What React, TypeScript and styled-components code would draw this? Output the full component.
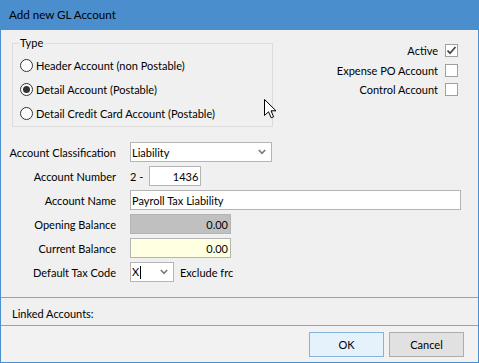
import React from "react";
import styled, { createGlobalStyle } from "styled-components";

const GlobalStyle = createGlobalStyle`
  html, body { margin: 0; padding: 0; background: #ffffff; }
  body {
    font-family: Lato, "Noto Sans", "DejaVu Sans", sans-serif;
    font-size: 11px;
    color: #000000;
  }
  * { box-sizing: border-box; }
`;

const Window = styled.div`
  position: relative;
  width: 479px;
  height: 363px;
  background: #4b8ece;
  padding: 0 1px 1px 1px;
  display: flex;
  flex-direction: column;
  overflow: hidden;
`;

const TitleBar = styled.div`
  height: 30px;
  flex: none;
  display: flex;
  align-items: center;
  padding-left: 8px;
  padding-bottom: 1px;
  font-size: 11.6px;
  color: #000000;
`;

const Client = styled.div`
  flex: 1;
  background: #f0f0f0;
  display: flex;
  flex-direction: column;
`;

const TopSection = styled.div`
  display: flex;
  padding: 5px 20px 0 11px;
`;

const GroupBox = styled.fieldset`
  width: 261px;
  height: 92px;
  margin: 0;
  padding: 2px 6px 0 6px;
  border: 1px solid #dcdcdc;
  display: flex;
  flex-direction: column;
`;

const Legend = styled.legend`
  padding: 0 1px;
  line-height: 16px;
`;

const RadioRow = styled.label`
  height: 24px;
  display: flex;
  align-items: center;
  gap: 3px;
  padding-left: 1px;
`;

const RadioCircle = styled.span<{ $checked?: boolean }>`
  width: 13px;
  height: 13px;
  border-radius: 50%;
  border: 1px solid #333333;
  background: #ffffff;
  display: flex;
  align-items: center;
  justify-content: center;
  flex: none;
  &::after {
    content: "";
    width: 7px;
    height: 7px;
    border-radius: 50%;
    background: ${(p) => (p.$checked ? "#333333" : "transparent")};
  }
`;

const CheckColumn = styled.div`
  flex: 1;
  display: flex;
  flex-direction: column;
  align-items: flex-end;
  padding-top: 6px;
`;

const CheckRow = styled.label`
  height: 19.5px;
  display: flex;
  align-items: center;
  gap: 7px;
`;

const CheckBox = styled.span`
  width: 13px;
  height: 13px;
  border: 1px solid #a0a0a0;
  background: #ffffff;
  display: flex;
  align-items: center;
  justify-content: center;
  flex: none;
`;

const FormGrid = styled.div`
  display: grid;
  grid-template-columns: 115px 1fr;
  grid-auto-rows: 24px;
  column-gap: 14px;
  margin-top: 13px;
  padding-right: 16px;
  align-items: center;
`;

const FieldLabel = styled.div`
  text-align: right;
  white-space: nowrap;
`;

const Field = styled.div<{ $width: number; $bg?: string; $align?: string }>`
  width: ${(p) => p.$width}px;
  height: 20px;
  border: 1px solid #b4b4b4;
  background: ${(p) => p.$bg || "#ffffff"};
  display: flex;
  align-items: center;
  justify-content: ${(p) => (p.$align === "right" ? "flex-end" : "flex-start")};
  padding: 0 2px 0 1px;
  white-space: nowrap;
  overflow: hidden;
`;

const SelectText = styled.span`
  flex: 1;
`;

const Chevron = styled.svg`
  flex: none;
  margin-right: 3px;
`;

const InlineGroup = styled.div`
  display: flex;
  align-items: center;
  gap: 6px;
`;

const Caret = styled.span`
  display: inline-block;
  width: 1px;
  height: 13px;
  background: #000000;
  margin-left: 1px;
  vertical-align: middle;
`;

const Spacer = styled.div`
  flex: 1;
`;

const Separator = styled.div`
  height: 1px;
  background: #a0a0a0;
  flex: none;
`;

const LinkedRow = styled.div`
  height: 27px;
  flex: none;
  padding: 8px 0 0 11px;
  line-height: 16px;
`;

const Footer = styled.div`
  height: 36px;
  flex: none;
  background: #f2f2f2;
  display: flex;
  justify-content: flex-end;
  align-items: flex-start;
  gap: 5px;
  padding: 6px 14px 0 0;
`;

const Button = styled.button<{ $primary?: boolean }>`
  width: 75px;
  height: 25px;
  font-family: inherit;
  font-size: inherit;
  color: #000000;
  border: 1px solid ${(p) => (p.$primary ? "#86b4e2" : "#adadad")};
  background: ${(p) => (p.$primary ? "#e5f1fb" : "#e1e1e1")};
  padding: 0;
`;

const Cursor = styled.svg`
  position: absolute;
  left: 264px;
  top: 99px;
`;

const ChevronIcon = () => (
  <Chevron width="8" height="6" viewBox="0 0 8 6">
    <polyline points="0.8,1 4,4.4 7.2,1" fill="none" stroke="#7a7a7a" strokeWidth="1.6" />
  </Chevron>
);

export default function App() {
  return (
    <>
      <GlobalStyle />
      <Window>
        <TitleBar>Add new GL Account</TitleBar>
        <Client>
          <TopSection>
            <GroupBox>
              <Legend>Type</Legend>
              <RadioRow>
                <RadioCircle />
                Header Account (non Postable)
              </RadioRow>
              <RadioRow>
                <RadioCircle $checked />
                Detail Account (Postable)
              </RadioRow>
              <RadioRow>
                <RadioCircle />
                Detail Credit Card Account (Postable)
              </RadioRow>
            </GroupBox>
            <CheckColumn>
              <CheckRow>
                Active
                <CheckBox>
                  <svg width="11" height="11" viewBox="0 0 11 11">
                    <polyline points="1.5,5.5 4,8.2 9.5,2" fill="none" stroke="#404040" strokeWidth="1.7" />
                  </svg>
                </CheckBox>
              </CheckRow>
              <CheckRow>
                Expense PO Account
                <CheckBox />
              </CheckRow>
              <CheckRow>
                Control Account
                <CheckBox />
              </CheckRow>
            </CheckColumn>
          </TopSection>
          <FormGrid>
            <FieldLabel>Account Classification</FieldLabel>
            <Field $width={142}>
              <SelectText>Liability</SelectText>
              <ChevronIcon />
            </Field>
            <FieldLabel>Account Number</FieldLabel>
            <InlineGroup>
              <span>2 -</span>
              <Field $width={52} $align="right">1436</Field>
            </InlineGroup>
            <FieldLabel>Account Name</FieldLabel>
            <Field $width={331}>Payroll Tax Liability</Field>
            <FieldLabel>Opening Balance</FieldLabel>
            <Field $width={101} $bg="#c0c0c0" $align="right">0.00</Field>
            <FieldLabel>Current Balance</FieldLabel>
            <Field $width={101} $bg="#ffffe1" $align="right">0.00</Field>
            <FieldLabel>Default Tax Code</FieldLabel>
            <InlineGroup>
              <Field $width={44}>
                <SelectText>
                  X<Caret />
                </SelectText>
                <ChevronIcon />
              </Field>
              <span>Exclude frc</span>
            </InlineGroup>
          </FormGrid>
          <Spacer />
          <Separator />
          <LinkedRow>Linked Accounts:</LinkedRow>
          <Separator />
          <Footer>
            <Button $primary>OK</Button>
            <Button>Cancel</Button>
          </Footer>
        </Client>
        <Cursor width="13" height="20" viewBox="0 0 13 20">
          <path d="M0.5,0.5 L0.5,16.5 L4.5,12.8 L7.2,18.8 L9.6,17.8 L7,11.8 L12,11.8 Z" fill="#ffffff" stroke="#000000" strokeWidth="1" strokeLinejoin="miter" />
        </Cursor>
      </Window>
    </>
  );
}
